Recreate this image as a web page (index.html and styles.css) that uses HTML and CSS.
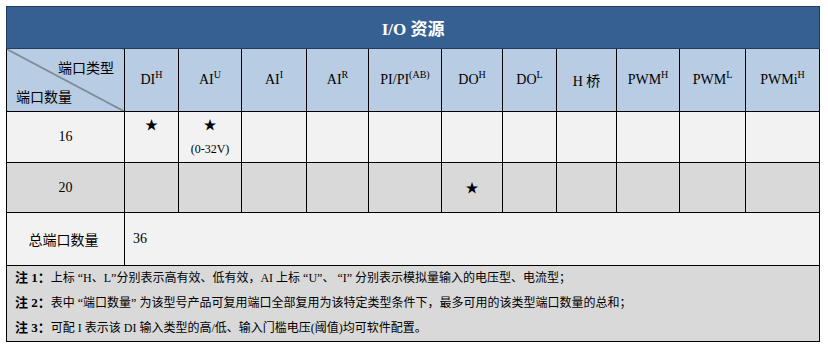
FILE: index.html
```html
<!DOCTYPE html>
<html lang="zh-CN">
<head>
<meta charset="utf-8">
<title>I/O 资源</title>
<link rel="stylesheet" href="styles.css">
</head>
<body>
<table class="io">
  <colgroup>
    <col class="w-first">
    <col class="w-di">
    <col class="w-aiu">
    <col class="w-aii">
    <col class="w-air">
    <col class="w-pi">
    <col class="w-doh">
    <col class="w-dol">
    <col class="w-hb">
    <col class="w-pwmh">
    <col class="w-pwml">
    <col class="w-pwmi">
  </colgroup>
  <thead>
    <tr class="row-title">
      <th class="title" colspan="12">I/O 资源</th>
    </tr>
    <tr class="row-types">
      <th class="diag">
        <div class="diag-box">
          <span class="diag-top">端口类型</span>
          <span class="diag-bottom">端口数量</span>
        </div>
      </th>
      <th>DI<sup>H</sup></th>
      <th>AI<sup>U</sup></th>
      <th>AI<sup>I</sup></th>
      <th>AI<sup>R</sup></th>
      <th>PI/PI<sup>(AB)</sup></th>
      <th>DO<sup>H</sup></th>
      <th>DO<sup>L</sup></th>
      <th>H 桥</th>
      <th>PWM<sup>H</sup></th>
      <th>PWM<sup>L</sup></th>
      <th>PWMi<sup>H</sup></th>
    </tr>
  </thead>
  <tbody>
    <tr class="row-16">
      <th class="count">16</th>
      <td class="mark">★<br>&nbsp;</td>
      <td class="mark">★<br><span class="range">(0-32V)</span></td>
      <td></td><td></td><td></td><td></td><td></td><td></td><td></td><td></td><td></td>
    </tr>
    <tr class="row-20">
      <th class="count">20</th>
      <td></td><td></td><td></td><td></td><td></td>
      <td class="mark">★</td>
      <td></td><td></td><td></td><td></td><td></td>
    </tr>
    <tr class="row-total">
      <th class="count">总端口数量</th>
      <td class="total" colspan="11">36</td>
    </tr>
    <tr class="row-notes">
      <td class="notes" colspan="12">
        <div class="note"><b>注 1：</b>上标 “H、L”分别表示高有效、低有效，AI 上标 “U”、 “I” 分别表示模拟量输入的电压型、电流型；</div>
        <div class="note"><b>注 2：</b>表中 “端口数量” 为该型号产品可复用端口全部复用为该特定类型条件下，最多可用的该类型端口数量的总和；</div>
        <div class="note"><b>注 3：</b>可配 I 表示该 DI 输入类型的高/低、输入门槛电压(阈值)均可软件配置。</div>
      </td>
    </tr>
  </tbody>
</table>
</body>
</html>
```
FILE: styles.css
```css
html, body {
  margin: 0;
  padding: 0;
  background: #ffffff;
}

body {
  padding: 6px 0 0 6px;
  font-family: "Liberation Serif", "Noto Sans CJK SC", serif;
  color: #000;
}

.io {
  border-collapse: collapse;
  table-layout: fixed;
  width: 814px;
  font-size: 14px;
}

.w-first { width: 118px; }
.w-di { width: 54px; }
.w-aiu { width: 63px; }
.w-aii { width: 65px; }
.w-air { width: 62px; }
.w-pi { width: 73px; }
.w-doh { width: 61px; }
.w-dol { width: 54px; }
.w-hb { width: 60px; }
.w-pwmh { width: 63px; }
.w-pwml { width: 66px; }
.w-pwmi { width: 74px; }

.io th,
.io td {
  border: 1px solid #000;
  padding: 0;
  text-align: center;
  vertical-align: middle;
  font-weight: normal;
}

.row-title { height: 42px; }

.title {
  background: #366092;
  color: #fff;
  font-weight: bold !important;
  font-size: 17px;
  border-color: #1e3d63 !important;
}

.row-types { height: 62px; }

.row-types th {
  background: #b8cce4;
  font-size: 14px;
}

sup {
  font-size: 10px;
  vertical-align: 6px;
  line-height: 0;
}

.diag {
  background: #b8cce4 linear-gradient(to top right,
      transparent calc(50% - 0.8px),
      #3a3a3a 50%,
      transparent calc(50% + 0.8px)) !important;
}

.diag-box {
  height: 62px;
  box-sizing: border-box;
  padding: 8px 10px 5px 9px;
  display: flex;
  flex-direction: column;
  justify-content: space-between;
  font-family: "Noto Sans CJK SC", sans-serif;
  font-size: 14px;
  line-height: 20px;
}

.diag-top { text-align: right; }
.diag-bottom { text-align: left; }

.row-16 { height: 51px; }
.row-20 { height: 50px; }
.row-total { height: 53px; }

.row-16 th, .row-16 td { background: #f2f2f2; }
.row-20 th, .row-20 td { background: #d9d9d9; }
.row-total th, .row-total td { background: #f2f2f2; }

.count {
  font-size: 14px;
}

.row-total .count {
  font-family: "Noto Sans CJK SC", sans-serif;
  padding-right: 4px !important;
}

.mark {
  font-size: 13px;
  line-height: 24px;
}

.range {
  font-size: 12px;
}

.total {
  text-align: left !important;
  padding-left: 8px !important;
}

.notes {
  background: #d9d9d9;
  text-align: left !important;
  padding: 0 8px !important;
  font-size: 12px;
}

.note {
  height: 25px;
  line-height: 25px;
  white-space: nowrap;
  overflow: visible;
}

.note b {
  font-weight: bold;
  font-size: 13px;
  line-height: 1;
}
```
